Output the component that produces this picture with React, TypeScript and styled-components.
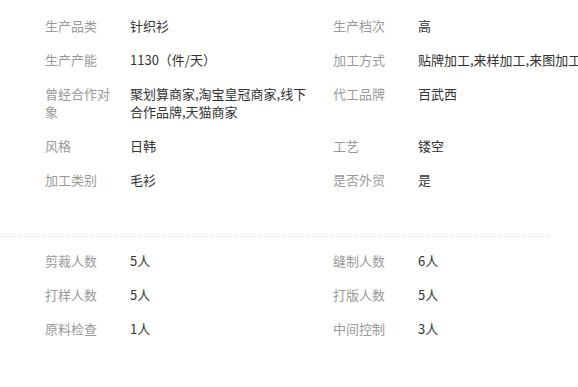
import React from "react";
import styled, { createGlobalStyle } from "styled-components";

const Global = createGlobalStyle`
  html, body {
    margin: 0;
    padding: 0;
    background: #ffffff;
    overflow: hidden;
  }
  body {
    font-family: "Noto Sans CJK SC", "Noto Sans", sans-serif;
    font-size: 13px;
  }
`;

const Page = styled.div`
  width: 578px;
  padding-top: 9px;
`;

const InfoGrid = styled.div<{ $top?: number }>`
  display: grid;
  grid-template-columns: 85px 203px 85px max-content;
  padding-left: 45px;
  margin-top: ${(p) => p.$top ?? 0}px;
`;

const Label = styled.div`
  padding: 8px 0;
  line-height: 18px;
  color: #999999;
  white-space: nowrap;
`;

const Value = styled.div<{ $wrap?: boolean }>`
  padding: 8px ${(p) => (p.$wrap ? "18px" : "0")} 8px 0;
  line-height: 18px;
  color: #333333;
  white-space: ${(p) => (p.$wrap ? "normal" : "nowrap")};
  word-break: break-all;
`;

const Divider = styled.div`
  width: 551px;
  height: 1px;
  margin-top: 39px;
  background-image: repeating-linear-gradient(
    to right,
    #d4d4d4 0,
    #d4d4d4 1px,
    transparent 1px,
    transparent 3px
  );
`;

type Pair = [string, string, string, string];

const topRows: Pair[] = [
  ["生产品类", "针织衫", "生产档次", "高"],
  ["生产产能", "1130（件/天）", "加工方式", "贴牌加工,来样加工,来图加工"],
  ["曾经合作对象", "聚划算商家,淘宝皇冠商家,线下合作品牌,天猫商家", "代工品牌", "百武西"],
  ["风格", "日韩", "工艺", "镂空"],
  ["加工类别", "毛衫", "是否外贸", "是"],
];

const bottomRows: Pair[] = [
  ["剪裁人数", "5人", "缝制人数", "6人"],
  ["打样人数", "5人", "打版人数", "5人"],
  ["原料检查", "1人", "中间控制", "3人"],
];

const LeftLabel = styled(Label)`
  padding-right: 12px;
  white-space: normal;
  word-break: break-all;
`;

function Rows({ rows }: { rows: Pair[] }) {
  return (
    <>
      {rows.map((r) => (
        <React.Fragment key={r[0]}>
          <LeftLabel>{r[0]}</LeftLabel>
          <Value $wrap>{r[1]}</Value>
          <Label>{r[2]}</Label>
          <Value>{r[3]}</Value>
        </React.Fragment>
      ))}
    </>
  );
}

export default function App() {
  return (
    <Page>
      <Global />
      <InfoGrid>
        <Rows rows={topRows} />
      </InfoGrid>
      <Divider />
      <InfoGrid $top={7}>
        <Rows rows={bottomRows} />
      </InfoGrid>
    </Page>
  );
}
